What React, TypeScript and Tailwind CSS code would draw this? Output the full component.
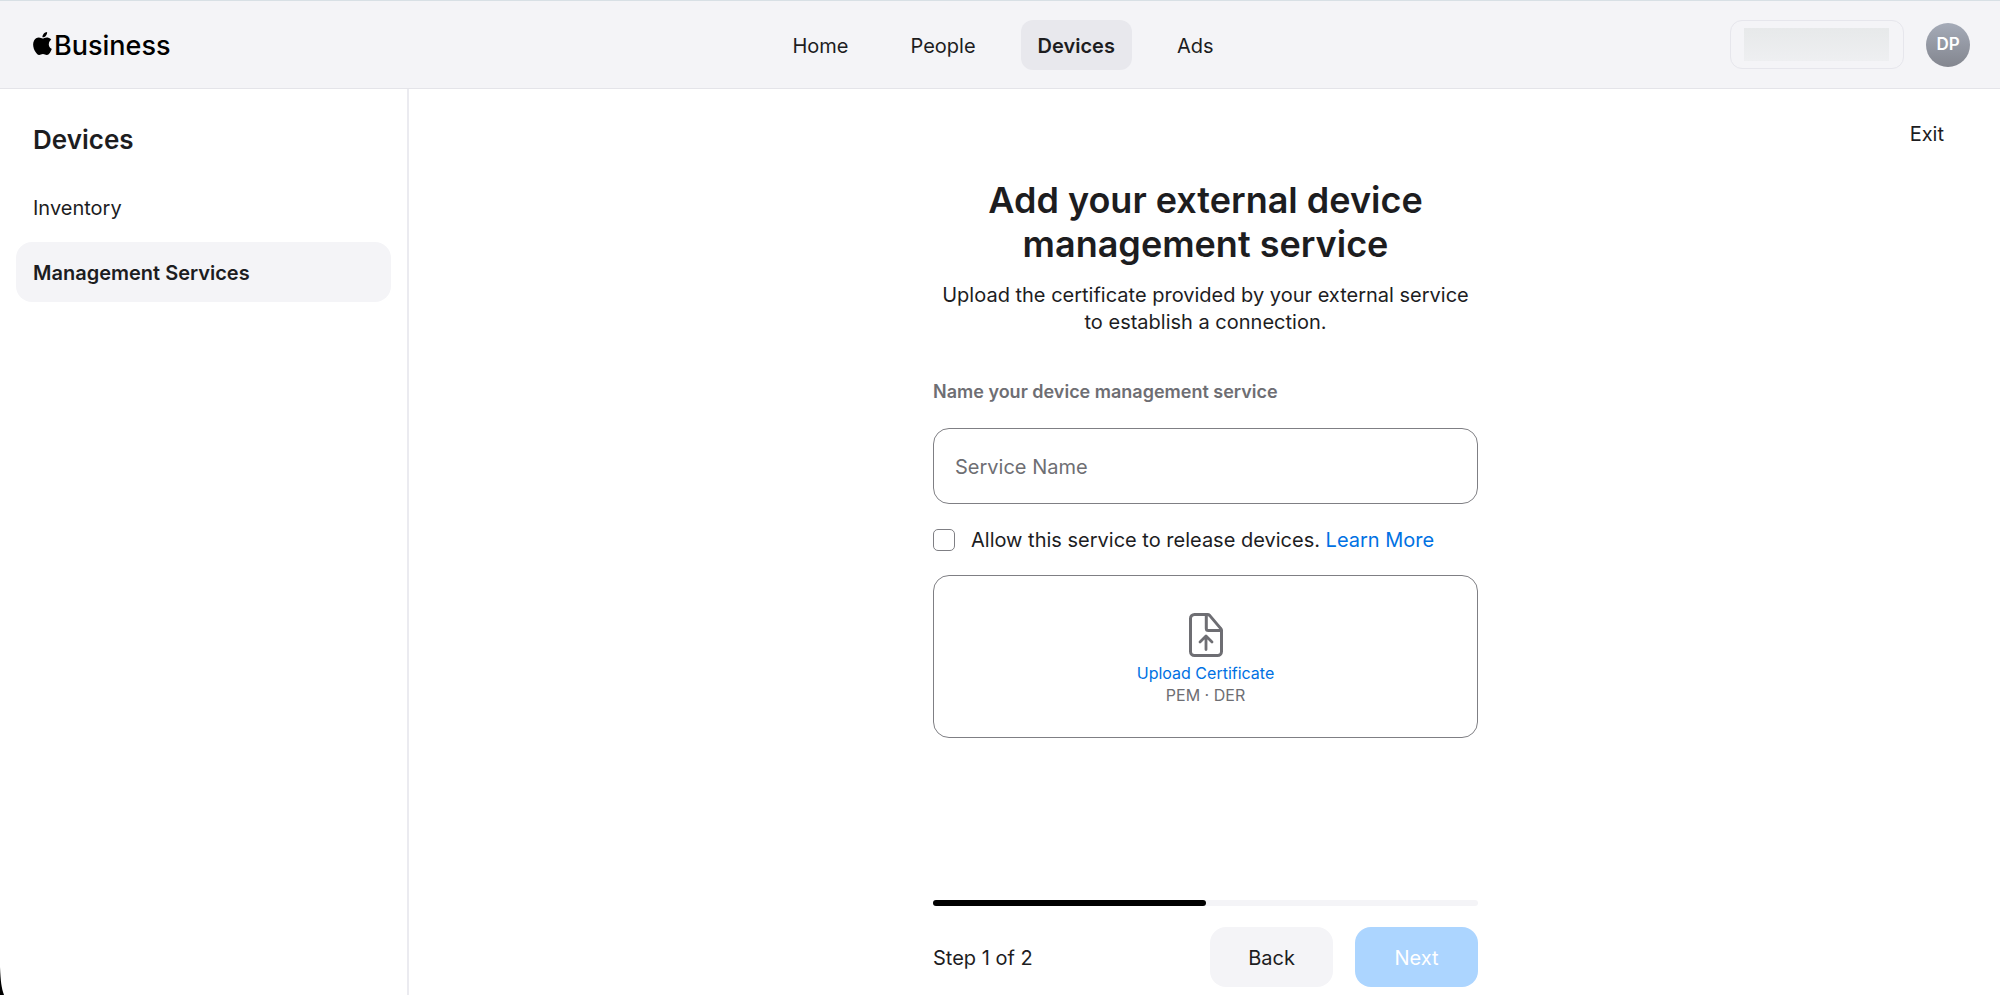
import { useState } from "react";
import { SiApple } from "react-icons/si";

const NAV_ITEMS = ["Home", "People", "Devices", "Ads"];
const SIDEBAR_ITEMS = ["Inventory", "Management Services"];

function Header() {
  const [active, setActive] = useState("Devices");

  return (
    <header className="grid grid-cols-[1fr_auto_1fr] items-center h-[89px] border-t border-t-[#d8e0e5] border-b border-b-[#e4e4e9] bg-[#f4f4f7]">
      <a href="#" className="flex items-center pl-[31px] pt-0.5 text-black">
        <SiApple className="size-[23px] -mt-1" aria-hidden="true" />
        <span className="text-[27px] leading-8 font-medium">Business</span>
      </a>

      <nav className="flex items-center gap-7 pl-1.5">
        {NAV_ITEMS.map((item) => (
          <button
            key={item}
            onClick={() => setActive(item)}
            className={`h-[50px] px-[17px] pt-0.5 rounded-xl text-xl ${active === item ? "bg-[#e8e8ed] font-semibold" : ""}`}
          >
            {item}
          </button>
        ))}
      </nav>

      <div className="flex items-center justify-end gap-[22px] pr-[30px]">
        <button
          aria-label="Organization"
          className="w-[174px] h-[49px] flex items-center px-[13px] rounded-xl border border-[#e6e6ec]"
        >
          <span className="block w-[145px] h-[33px] bg-linear-to-b from-[#e7e9ea] to-[#eeeff1]" />
        </button>
        <button className="size-11 rounded-full bg-linear-to-b from-[#a5abb8] to-[#83868f] text-white text-[17px] font-semibold">
          DP
        </button>
      </div>
    </header>
  );
}

function Sidebar() {
  const [active, setActive] = useState("Management Services");

  return (
    <aside className="w-[409px] shrink-0 border-r-2 border-[#ebebf0] px-4 pt-[35px]">
      <h2 className="px-[17px] text-[26px] leading-8 font-semibold">Devices</h2>
      <div className="mt-[21px] flex flex-col gap-[5px]">
        {SIDEBAR_ITEMS.map((item) => (
          <button
            key={item}
            onClick={() => setActive(item)}
            className={`h-[60px] px-[17px] pt-0.5 rounded-2xl text-left text-xl ${active === item ? "bg-[#f4f4f7] font-semibold" : ""}`}
          >
            {item}
          </button>
        ))}
      </div>
    </aside>
  );
}

function UploadIcon() {
  return (
    <svg
      width="34"
      height="44"
      viewBox="0 0 34 44"
      fill="none"
      stroke="#6e6e73"
      strokeWidth="3"
      strokeLinecap="round"
      strokeLinejoin="round"
      aria-hidden="true"
    >
      <path d="M18.5 1.5H5.5a4 4 0 0 0-4 4v33a4 4 0 0 0 4 4h23a4 4 0 0 0 4-4V17.5a3 3 0 0 0-.9-2.1L20.6 2.4a3 3 0 0 0-2.1-.9z" />
      <path d="M17.3 2v13.5a2 2 0 0 0 2 2H32" />
      <path d="M17 36.5V23.5M11 29l6-6 6 6" strokeWidth="2.8" />
    </svg>
  );
}

function AddServiceForm() {
  const [name, setName] = useState("");
  const [allowRelease, setAllowRelease] = useState(false);

  return (
    <form
      className="flex-1 flex flex-col w-full max-w-[545px] mx-auto"
      onSubmit={(e) => e.preventDefault()}
    >
      <h1 className="text-center text-4xl leading-11 font-semibold">
        Add your external device
        <br />
        management service
      </h1>
      <p className="mt-4 text-center text-xl leading-[27px]">
        Upload the certificate provided by your external service
        <br />
        to establish a connection.
      </p>

      <label htmlFor="service-name" className="mt-11 text-lg leading-6 font-semibold text-[#6e6e73]">
        Name your device management service
      </label>
      <input
        id="service-name"
        type="text"
        placeholder="Service Name"
        value={name}
        onChange={(e) => setName(e.target.value)}
        className="mt-6 h-[76px] px-[21px] pt-0.5 rounded-2xl border border-[#7f7f84] text-xl placeholder:text-[#6e6e73]"
      />

      <div className="mt-[22px] flex items-center gap-4 text-xl leading-7">
        <input
          id="allow-release"
          type="checkbox"
          checked={allowRelease}
          onChange={(e) => setAllowRelease(e.target.checked)}
          className="size-[22px] appearance-none rounded-[5px] border border-[#7f7f84] bg-white checked:bg-[#0071e3]"
        />
        <p>
          <label htmlFor="allow-release">Allow this service to release devices.</label>{" "}
          <a href="#" className="text-[#0071e3]">Learn More</a>
        </p>
      </div>

      <button
        type="button"
        className="mt-[21px] h-[163px] flex flex-col items-center pt-[37px] rounded-2xl border border-[#7f7f84] text-base leading-[22px]"
      >
        <UploadIcon />
        <span className="mt-[5px] text-[#0071e3]">Upload Certificate</span>
        <span className="text-[#6e6e73]">PEM · DER</span>
      </button>

      <div className="mt-auto pt-10 pb-2">
        <div className="h-1.5 rounded-full bg-[#f4f4f7]">
          <div className="h-1.5 w-1/2 rounded-full bg-black" />
        </div>
        <div className="mt-[21px] flex items-center gap-[22px] text-xl">
          <span className="mr-auto pt-0.5">Step 1 of 2</span>
          <button type="button" className="w-[123px] h-[60px] pt-0.5 rounded-2xl bg-[#f4f4f7]">
            Back
          </button>
          <button type="submit" disabled className="w-[123px] h-[60px] pt-0.5 rounded-2xl bg-[#acd5ff] text-white">
            Next
          </button>
        </div>
      </div>
    </form>
  );
}

function App() {
  return (
    <div className="relative min-h-screen flex flex-col bg-white font-['Inter',sans-serif] text-[#1d1d1f]">
      <Header />
      <div className="flex-1 flex">
        <Sidebar />
        <main className="flex-1 flex flex-col pt-[31px]">
          <button className="self-end mr-14 text-xl leading-7">Exit</button>
          <div className="flex-1 flex flex-col pt-[30px] pl-0.5">
            <AddServiceForm />
          </div>
        </main>
      </div>
      {/* rounded window corner */}
      <svg className="absolute left-0 bottom-0" width="4" height="28" viewBox="0 0 4 28" aria-hidden="true">
        <path d="M0 0C.6 14 1.5 21 4 28H0z" fill="#000" />
      </svg>
    </div>
  );
}

export default App;
